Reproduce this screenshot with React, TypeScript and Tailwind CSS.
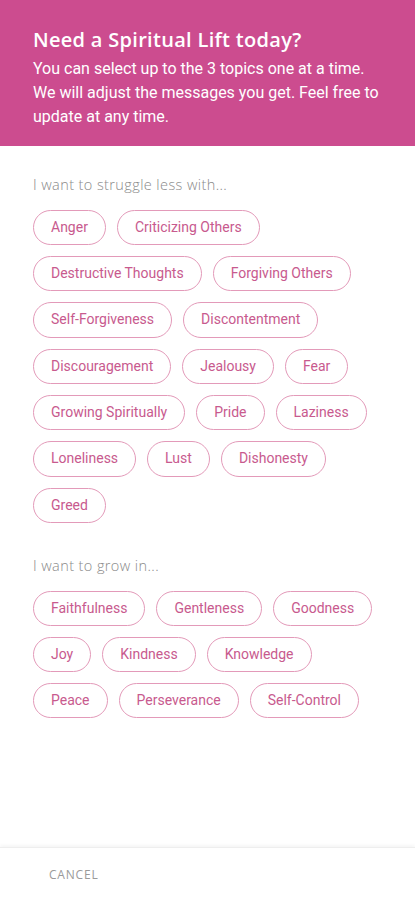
import React from 'react';

const struggles = [
  'Anger',
  'Criticizing Others',
  'Destructive Thoughts',
  'Forgiving Others',
  'Self-Forgiveness',
  'Discontentment',
  'Discouragement',
  'Jealousy',
  'Fear',
  'Growing Spiritually',
  'Pride',
  'Laziness',
  'Loneliness',
  'Lust',
  'Dishonesty',
  'Greed',
];

const growth = [
  'Faithfulness',
  'Gentleness',
  'Goodness',
  'Joy',
  'Kindness',
  'Knowledge',
  'Peace',
  'Perseverance',
  'Self-Control',
];

function Chip({ label }: { label: string }) {
  return (
    <button className="h-[35.3px] rounded-full border border-[#e39ab9] px-[17px] font-['Roboto',sans-serif] text-[14px] text-[#c85a8e]">
      {label}
    </button>
  );
}

function Section({ title, items }: { title: string; items: string[] }) {
  return (
    <div>
      <p className="font-['Open_Sans',sans-serif] text-[14.5px] font-light tracking-[0.4px] text-[#8a8a8a]">
        {title}
      </p>
      <div className="mt-[14px] flex flex-wrap gap-x-[11px] gap-y-[11px]">
        {items.map((item) => (
          <Chip key={item} label={item} />
        ))}
      </div>
    </div>
  );
}

export default function App() {
  return (
    <div className="flex h-[900px] w-[415px] flex-col bg-white">
      <header className="h-[146px] bg-[#cc4c8f] px-[33px] pt-[26px] text-white">
        <h1 className="font-['Open_Sans',sans-serif] text-[20px] font-semibold leading-[28px] tracking-[0.3px]">
          Need a Spiritual Lift today?
        </h1>
        <p className="mt-[3px] font-['Roboto',sans-serif] text-[16px] leading-[24px]">
          You can select up to the 3 topics one at a time. We will adjust the messages you get. Feel free to update at any time.
        </p>
      </header>
      <main className="flex flex-1 flex-col gap-[32px] px-[33px] pt-[28px]">
        <Section title="I want to struggle less with..." items={struggles} />
        <Section title="I want to grow in..." items={growth} />
      </main>
      <footer className="h-[53px] border-t border-[#eeeeee] shadow-[0_-2px_3px_rgba(0,0,0,0.04)]">
        <button className="ml-[49px] mt-[18px] font-['Open_Sans',sans-serif] text-[12px] tracking-[0.8px] text-[#9a9a9a]">
          CANCEL
        </button>
      </footer>
    </div>
  );
}
